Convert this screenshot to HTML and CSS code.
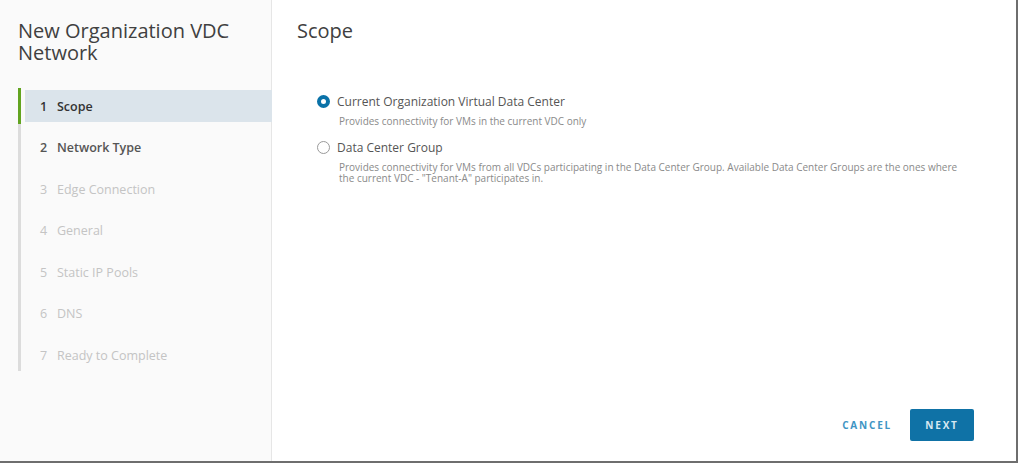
FILE: index.html
```html
<!DOCTYPE html>
<html>
<head>
<meta charset="utf-8">
<link rel="stylesheet" href="styles.css">
</head>
<body>
<div class="dialog">
  <aside class="sidebar">
    <h1 class="title">New Organization VDC Network</h1>
    <ol class="steps">
      <li class="step active"><span class="num">1</span>Scope</li>
      <li class="step next"><span class="num">2</span>Network Type</li>
      <li class="step"><span class="num">3</span>Edge Connection</li>
      <li class="step"><span class="num">4</span>General</li>
      <li class="step"><span class="num">5</span>Static IP Pools</li>
      <li class="step"><span class="num">6</span>DNS</li>
      <li class="step"><span class="num">7</span>Ready to Complete</li>
    </ol>
  </aside>
  <main class="content">
    <h2 class="heading">Scope</h2>
    <div class="options">
      <div class="option">
        <div class="opt-row"><span class="radio checked"></span><span class="label">Current Organization Virtual Data Center</span></div>
        <p class="desc">Provides connectivity for VMs in the current VDC only</p>
      </div>
      <div class="option">
        <div class="opt-row"><span class="radio"></span><span class="label">Data Center Group</span></div>
        <p class="desc">Provides connectivity for VMs from all VDCs participating in the Data Center Group. Available Data Center Groups are the ones where the current VDC - "Tenant-A" participates in.</p>
      </div>
    </div>
    <div class="footer">
      <button class="btn btn-link">CANCEL</button>
      <button class="btn btn-primary">NEXT</button>
    </div>
  </main>
</div>
</body>
</html>
```
FILE: styles.css
```css
html, body {
  margin: 0;
  padding: 0;
  background: #ffffff;
}
body {
  font-family: "Open Sans", Lato, sans-serif;
  color: #333;
}
.dialog {
  display: flex;
  width: 1016px;
  height: 461px;
  border-right: 2px solid #6e6e6e;
  border-bottom: 2px solid #6e6e6e;
  background: #fff;
}
.sidebar {
  width: 272px;
  flex: none;
  background: #fafafa;
  border-right: 1px solid #e6e6e6;
  box-sizing: border-box;
  padding: 20px 0 0 18px;
}
.title {
  margin: 0;
  font-size: 20px;
  font-weight: 400;
  line-height: 22px;
  color: #404040;
  width: 240px;
}
.steps {
  list-style: none;
  margin: 26px 0 0 0;
  padding: 0;
  border-left: 3px solid #dcdcdc;
  width: 251px;
}
.step {
  height: 32px;
  margin-bottom: 9.5px;
  display: flex;
  align-items: center;
  padding-left: 15px;
  margin-left: 4px;
  font-size: 12.5px;
  color: #c4c4c4;
}
.step:last-child {
  margin-bottom: 6px;
}
.step .num {
  width: 17px;
}
.step.active {
  background: #dbe4eb;
  color: #333;
  font-weight: 600;
  position: relative;
}
.step.active::before {
  content: "";
  position: absolute;
  left: -7px;
  top: -2px;
  width: 3px;
  height: 36px;
  background: #62a420;
}
.step.next {
  color: #555;
  font-weight: 600;
}
.content {
  flex: 1;
  display: flex;
  flex-direction: column;
  padding: 18px 42px 20px 25px;
}
.heading {
  margin: 0;
  font-size: 20px;
  font-weight: 400;
  line-height: 26px;
  color: #404040;
}
.options {
  margin-top: 48px;
  padding-left: 20px;
}
.option {
  margin-bottom: 11px;
}
.opt-row {
  display: flex;
  align-items: center;
  height: 18px;
}
.radio {
  width: 11px;
  height: 11px;
  border-radius: 50%;
  border: 1px solid #9a9a9a;
  background: #fff;
  margin-right: 7px;
  box-sizing: content-box;
  flex: none;
}
.radio.checked {
  width: 5px;
  height: 5px;
  border: 4px solid #0a72a8;
  background: #fff;
}
.label {
  font-size: 12px;
  color: #555;
}
.desc {
  margin: 6px 0 0 22px;
  font-size: 10px;
  line-height: 11px;
  color: #8a8a8a;
  max-width: 645px;
}
.footer {
  margin-top: auto;
  display: flex;
  justify-content: flex-end;
  align-items: center;
  gap: 10px;
}
.btn {
  font-family: "Open Sans", Lato, sans-serif;
  font-size: 10px;
  font-weight: 700;
  letter-spacing: 1.8px;
  border: none;
  cursor: pointer;
  height: 32px;
}
.btn-link {
  background: transparent;
  color: #3f95c4;
  padding: 0 8px;
}
.btn-primary {
  background: #0f72a6;
  color: #d6e8f2;
  width: 64px;
  border-radius: 2px;
  padding: 0;
}
```
